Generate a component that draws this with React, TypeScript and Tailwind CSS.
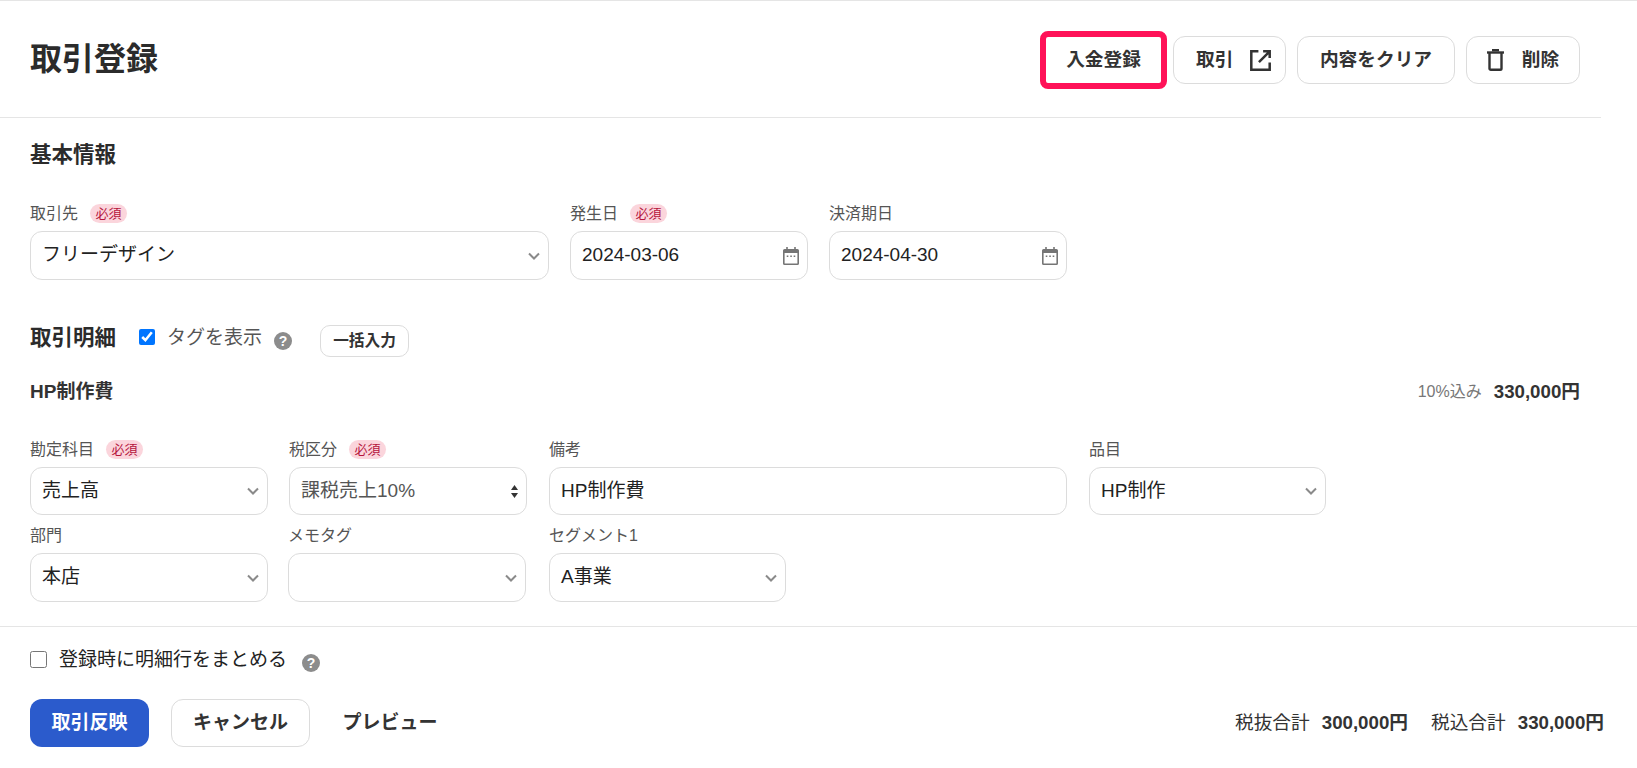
const Chevron = () => (
  <svg width="12" height="8" viewBox="0 0 12 8" fill="none" stroke="#8a8a8a" strokeWidth="2" className="shrink-0">
    <path d="M1 1.5l5 5 5-5" />
  </svg>
);

const UpDown = () => (
  <svg width="7" height="13" viewBox="0 0 7 13" fill="#333" className="shrink-0">
    <path d="M3.5 0L7 5H0z" />
    <path d="M3.5 13L0 8h7z" />
  </svg>
);

const CalendarIcon = () => (
  <svg width="16" height="18" viewBox="0 0 15 18" preserveAspectRatio="none" className="shrink-0">
    <path fill="#757575" d="M3 0h1.5v2h6V0H12v2h1.5A1.5 1.5 0 0 1 15 3.5v13a1.5 1.5 0 0 1-1.5 1.5h-12A1.5 1.5 0 0 1 0 16.500v-13A1.500 1.500 0 0 1 1.500 2H3z" />
    <rect x="1.500" y="6" width="12" height="10.500" fill="#fff" />
    <rect x="3.500" y="8.500" width="1.500" height="1.500" fill="#757575" />
    <rect x="6.800" y="8.500" width="1.500" height="1.500" fill="#757575" />
    <rect x="10" y="8.500" width="1.500" height="1.500" fill="#757575" />
  </svg>
);

const ExternalIcon = () => (
  <svg width="23" height="23" viewBox="0 0 22 22" fill="none" stroke="#333" strokeWidth="2.400">
    <path d="M9 2.200H2.200v17.600h17.600V13" />
    <path d="M9.500 12.500L19.800 2.200M13.500 2.200h6.300v6.300" />
  </svg>
);

const TrashIcon = () => (
  <svg width="17" height="22" viewBox="0 0 17 22" fill="none" stroke="#333" strokeWidth="2.400">
    <path d="M0 3.500h17" />
    <path d="M5 1.200h7" />
    <path d="M2.500 4v15.500a1.300 1.300 0 0 0 1.300 1.300h9.400a1.300 1.300 0 0 0 1.300-1.300V4" />
  </svg>
);

const Help = () => (
  <span className="flex h-[18px] w-[18px] shrink-0 items-center justify-center rounded-full bg-[#8c8c8c] text-[14px] font-bold leading-none text-white">
    ?
  </span>
);

const Required = () => (
  <span className="ml-3 flex h-[19px] w-[37px] items-center justify-center rounded-full bg-[#fbd5dc] text-[13px] leading-none text-[#b5143c]">
    必須
  </span>
);

type FieldProps = {
  label: string;
  required?: boolean;
  className: string;
  children: React.ReactNode;
};

const Field = ({ label, required, className, children }: FieldProps) => (
  <div className={className}>
    <div className="mb-2 flex h-5 items-center text-[16px] leading-5 text-[#555]">
      <span className="mt-px">{label}</span>
      {required && <Required />}
    </div>
    {children}
  </div>
);

const Control = ({ text, icon, tall, muted }: { text?: string; icon?: React.ReactNode; tall?: boolean; muted?: boolean }) => (
  <div
    className={`flex items-center justify-between rounded-xl border border-[#dcdcdc] bg-white pl-[11px] pr-[8px] ${tall ? 'h-[49px]' : 'h-12'} ${muted ? 'text-[#555]' : 'text-[#222]'}`}
  >
    <span>{text}</span>
    {icon}
  </div>
);

const App = () => {
  return (
    <div className="h-[768px] w-full overflow-hidden border-t border-[#e5e5e5] bg-white font-['Liberation_Sans','Noto_Sans_CJK_JP',sans-serif] text-[19px] text-[#333]">
      <header className="flex h-[117px] w-[1601px] items-center justify-between border-b border-[#e5e5e5] pl-[30px] pr-[21px]">
        <h1 className="text-[32px] font-bold text-[#2b2b2b]">取引登録</h1>
        <div className="mt-[2px] flex items-center text-[18.700px]">
          <button className="flex h-[58px] w-[127px] items-center justify-center rounded-lg border-[6px] border-[#ff1258] bg-white font-bold">
            入金登録
          </button>
          <button className="ml-[6px] flex h-12 w-[113px] items-center gap-[16px] rounded-xl border border-[#dcdcdc] pl-[22px] font-bold">
            取引
            <ExternalIcon />
          </button>
          <button className="ml-[11px] flex h-12 w-[158px] items-center justify-center rounded-xl border border-[#dcdcdc] font-bold">
            内容をクリア
          </button>
          <button className="ml-[11px] flex h-12 w-[114px] items-center justify-center gap-[18px] rounded-xl border border-[#dcdcdc] font-bold">
            <TrashIcon />
            削除
          </button>
        </div>
      </header>

      <main className="px-[30px]">
        <h2 className="mt-[23px] h-7 text-[21.500px] font-bold leading-7 text-[#2b2b2b]">基本情報</h2>

        <div className="mt-[34px] flex gap-[21px]">
          <Field label="取引先" required className="w-[519px]">
            <Control tall text="フリーデザイン" icon={<Chevron />} />
          </Field>
          <Field label="発生日" required className="w-[238px]">
            <Control tall text="2024-03-06" icon={<CalendarIcon />} />
          </Field>
          <Field label="決済期日" className="w-[238px]">
            <Control tall text="2024-04-30" icon={<CalendarIcon />} />
          </Field>
        </div>

        <div className="mt-[45px] flex h-8 items-center">
          <h2 className="-mt-[6px] w-[109px] text-[21.500px] font-bold leading-7 text-[#2b2b2b]">取引明細</h2>
          <input type="checkbox" defaultChecked className="-mt-2 h-4 w-4" />
          <span className="-mt-[6px] ml-3 w-[107px] text-[#555]">タグを表示</span>
          <Help />
          <button className="ml-7 flex h-8 w-[89px] items-center justify-center rounded-[10px] border border-[#dcdcdc] text-[15.700px] font-bold">
            一括入力
          </button>
        </div>

        <div className="mt-[23px] flex h-6 w-[1550px] items-center justify-between">
          <h3 className="font-bold">HP制作費</h3>
          <div className="flex items-center gap-3">
            <span className="text-[16px] text-[#777]">10%込み</span>
            <span className="text-[18.700px] font-bold">330,000円</span>
          </div>
        </div>

        <div className="mt-[35px] flex gap-[21px]">
          <Field label="勘定科目" required className="w-[238px]">
            <Control text="売上高" icon={<Chevron />} />
          </Field>
          <Field label="税区分" required className="w-[238px]">
            <Control muted text="課税売上10%" icon={<UpDown />} />
          </Field>
          <Field label="備考" className="ml-px w-[518px]">
            <Control text="HP制作費" />
          </Field>
          <Field label="品目" className="ml-px w-[237px]">
            <Control text="HP制作" icon={<Chevron />} />
          </Field>
        </div>

        <div className="mt-[10px] flex gap-[21px]">
          <Field label="部門" className="w-[238px]">
            <Control tall text="本店" icon={<Chevron />} />
          </Field>
          <Field label="メモタグ" className="-ml-px w-[238px]">
            <Control tall icon={<Chevron />} />
          </Field>
          <Field label="セグメント1" className="ml-[2px] w-[237px]">
            <Control tall text="A事業" icon={<Chevron />} />
          </Field>
        </div>
      </main>

      <footer className="mt-6 border-t border-[#e5e5e5] pl-[30px] pr-[33px]">
        <div className="mt-[23px] flex h-5 items-center">
          <input type="checkbox" className="-mt-[2px] h-[17px] w-[17px]" />
          <span className="ml-[12px] text-[#222]">登録時に明細行をまとめる</span>
          <span className="ml-[15px] mt-[6px]">
            <Help />
          </span>
        </div>
        <div className="mt-[29px] flex items-center justify-between">
          <div className="flex items-center">
            <button className="h-12 w-[119px] rounded-xl bg-[#2b5bcc] font-bold text-white">取引反映</button>
            <button className="ml-[22px] h-12 w-[139px] rounded-xl border border-[#dcdcdc] font-bold">キャンセル</button>
            <button className="ml-[11px] h-12 w-[138px] rounded-xl font-bold">プレビュー</button>
          </div>
          <div className="flex items-center text-[18.700px]">
            <span>税抜合計</span>
            <span className="ml-3 font-bold">300,000円</span>
            <span className="ml-[23px]">税込合計</span>
            <span className="ml-3 font-bold">330,000円</span>
          </div>
        </div>
      </footer>
    </div>
  );
};

export default App;
